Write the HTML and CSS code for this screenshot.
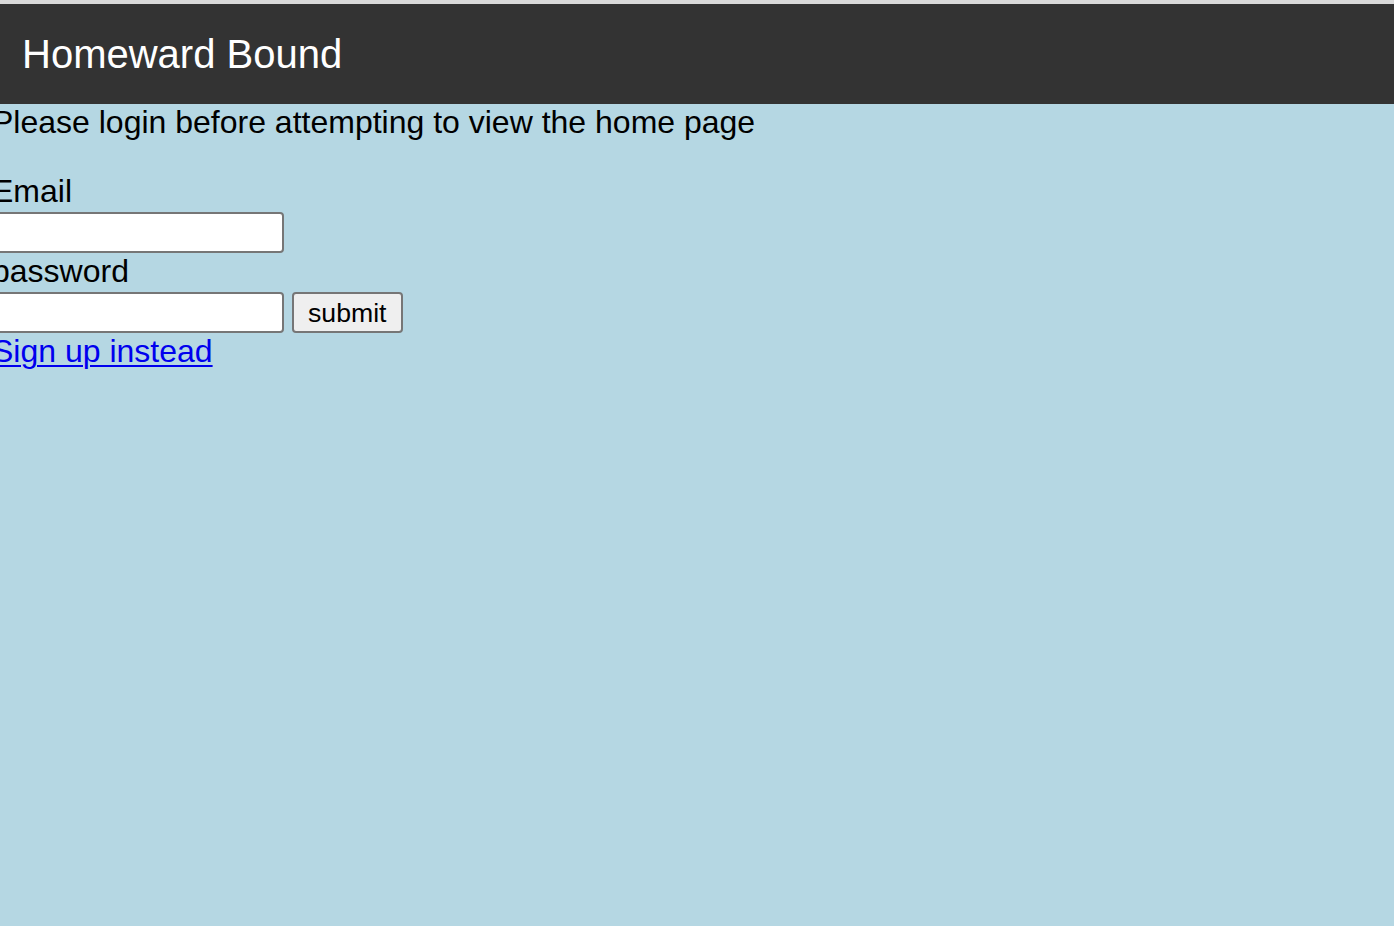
FILE: index.html
```html
<!DOCTYPE html>
<html lang="en">
<head>
<meta charset="utf-8">
<title>Homeward Bound</title>
<link rel="stylesheet" href="styles.css">
</head>
<body>
<div class="topline"></div>
<header class="header">
  <span class="title">Homeward Bound</span>
</header>
<main class="content">
  <p class="notice">Please login before attempting to view the home page</p>
  <form class="login" onsubmit="return false;">
    <label class="label" for="email">Email</label>
    <div class="row">
      <input class="field" id="email" type="text">
    </div>
    <label class="label" for="password">password</label>
    <div class="row">
      <input class="field" id="password" type="password">
      <button class="submit" type="submit">submit</button>
    </div>
    <a class="signup" href="#">Sign up instead</a>
  </form>
</main>
</body>
</html>
```

FILE: styles.css
```css
html, body {
  margin: 0;
  padding: 0;
}

body {
  background: #b5d7e3;
  font-family: "Liberation Sans", Arial, Helvetica, sans-serif;
  color: #000;
  font-size: 32px;
  min-height: 926px;
  overflow: hidden;
}

.topline {
  height: 4px;
  background: #d9d9d9;
}

.header {
  height: 100px;
  background: #333333;
  display: flex;
  align-items: center;
  padding-left: 22px;
}

.title {
  color: #ffffff;
  font-size: 40px;
  line-height: 46px;
}

.content {
  margin-left: -8px;
}

.notice {
  margin: 0 0 32px 0;
  line-height: 37px;
}

.login {
  display: flex;
  flex-direction: column;
  align-items: flex-start;
}

.label {
  display: block;
  line-height: 37px;
  height: 37px;
}

.row {
  display: flex;
  align-items: flex-start;
  gap: 8px;
  height: 41px;
  margin-top: 2px;
}

.field {
  box-sizing: border-box;
  width: 292px;
  height: 41px;
  margin: 0;
  border: 2px solid #767676;
  border-radius: 4px;
  background: #ffffff;
  padding: 2px 4px;
  font-family: "Liberation Sans", Arial, sans-serif;
  font-size: 26.67px;
}

.submit {
  box-sizing: border-box;
  height: 41px;
  margin: 0;
  padding: 0 14px;
  border: 2px solid #767676;
  border-radius: 4px;
  background: #efefef;
  color: #000;
  font-family: "Liberation Sans", Arial, sans-serif;
  font-size: 26.67px;
  line-height: 30px;
}

.signup {
  color: #0000ee;
  text-decoration: underline;
  text-underline-offset: 3px;
  text-decoration-thickness: 2px;
  line-height: 37px;
}
```
